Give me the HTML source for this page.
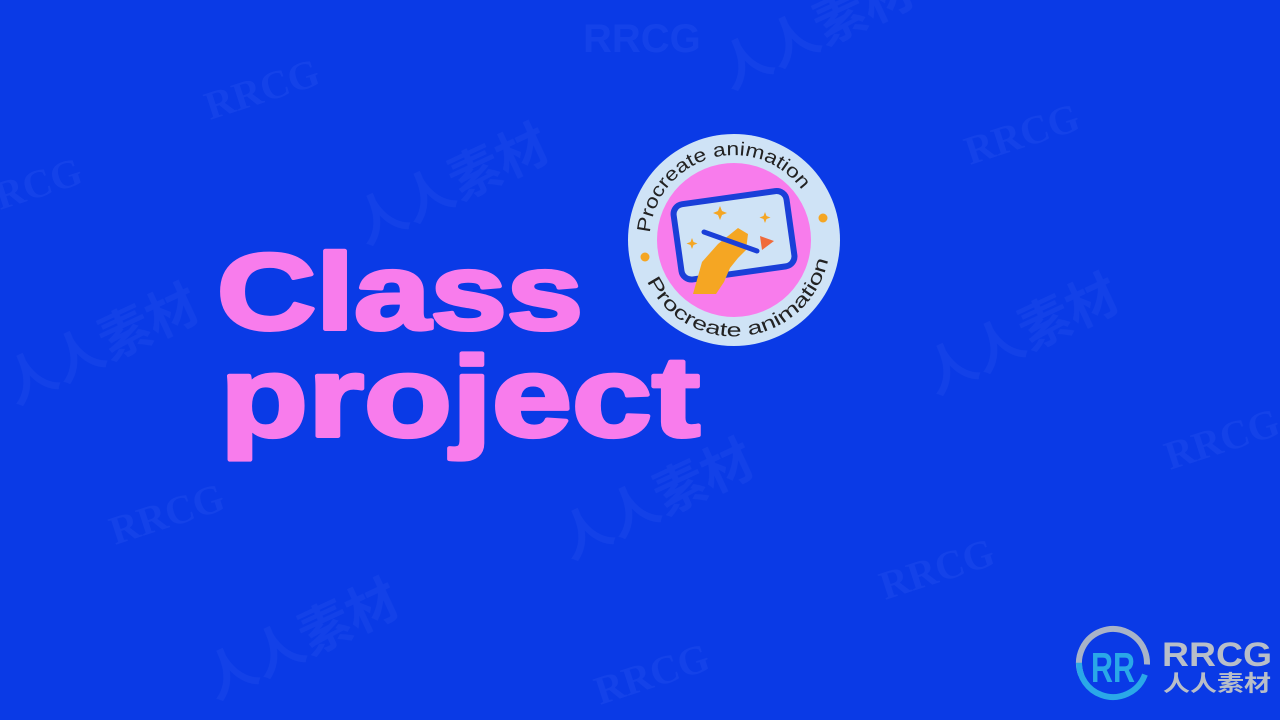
<!DOCTYPE html>
<html><head><meta charset="utf-8"><style>
html,body{margin:0;padding:0;width:1280px;height:720px;overflow:hidden;background:#0a3ae6;}
svg{position:absolute;left:0;top:0}
</style></head><body>
<svg width="1280" height="720" viewBox="0 0 1280 720" xmlns="http://www.w3.org/2000/svg">
<rect width="1280" height="720" fill="#0a3ae6"/>
<g font-family="Liberation Serif, serif" font-weight="bold" font-size="40" fill="#2a55ee" opacity="0.35">
<text x="583" y="52" font-family="Liberation Sans, sans-serif">RRCG</text>
<text x="210" y="120" transform="rotate(-18 210 120)">RRCG</text>
<text x="970" y="165" transform="rotate(-18 970 165)">RRCG</text>
<text x="0" y="210" transform="rotate(-18 0 210)">RCG</text>
<text x="1170" y="470" transform="rotate(-18 1170 470)">RRCG</text>
<text x="115" y="545" transform="rotate(-18 115 545)">RRCG</text>
<text x="885" y="600" transform="rotate(-18 885 600)">RRCG</text>
<text x="600" y="705" transform="rotate(-18 600 705)">RRCG</text>
</g>
<g font-family="Noto Sans CJK SC, sans-serif" font-weight="bold" font-size="52" fill="#2a55ee" opacity="0.3">
<text x="730" y="90" transform="rotate(-25 730 90)">人人素材</text>
<text x="365" y="245" transform="rotate(-25 365 245)">人人素材</text>
<text x="15" y="405" transform="rotate(-25 15 405)">人人素材</text>
<text x="935" y="395" transform="rotate(-25 935 395)">人人素材</text>
<text x="570" y="560" transform="rotate(-25 570 560)">人人素材</text>
<text x="215" y="700" transform="rotate(-25 215 700)">人人素材</text>
</g>
<g font-family="Liberation Sans, sans-serif" font-weight="bold" fill="#f87cec" stroke="#f87cec" stroke-width="4" stroke-linejoin="round">
<text x="217" y="329" font-size="108" textLength="366" lengthAdjust="spacingAndGlyphs">Class</text>
<text x="220" y="436" font-size="114" textLength="480" lengthAdjust="spacingAndGlyphs">project</text>
</g>
<g>
<circle cx="734" cy="240" r="106" fill="#cfe3f6"/>
<circle cx="734" cy="240" r="77" fill="#f87cec"/>
<circle cx="645" cy="257" r="4.5" fill="#f5a623"/>
<circle cx="823" cy="218" r="4.5" fill="#f5a623"/>
<defs>
<path id="arcTop" d="M 650 233 A 84 84 0 0 1 807 198"/>
<path id="arcBot" d="M 647 281 A 96 96 0 0 0 830 240"/>
</defs>
<text font-family="Liberation Sans, sans-serif" font-size="19" fill="#222"><textPath href="#arcTop" textLength="205" lengthAdjust="spacingAndGlyphs">Procreate animation</textPath></text>
<text font-family="Liberation Sans, sans-serif" font-size="19" fill="#222"><textPath href="#arcBot" textLength="240" lengthAdjust="spacingAndGlyphs">Procreate animation</textPath></text>
<g transform="rotate(-8 736 235)">
<rect x="677" y="197" width="114" height="76" rx="10" fill="#cfe3f6" stroke="#1a3fd8" stroke-width="6"/>
</g>
<path d="M720 206 l2 5 5 2 -5 2 -2 5 -2 -5 -5 -2 5 -2z" fill="#f5a623"/>
<path d="M765 212 l1.5 4 4 1.5 -4 1.5 -1.5 4 -1.5 -4 -4 -1.5 4 -1.5z" fill="#f5a623"/>
<path d="M692 238 l1.5 4 4 1.5 -4 1.5 -1.5 4 -1.5 -4 -4 -1.5 4 -1.5z" fill="#f5a623"/>
<path d="M760 236 l14 5 -12 9z" fill="#f06a3a"/>
<path d="M693 294 L702 262 L718 244 L738 228 L748 234 L746 250 L738 258 L730 268 L724 282 L716 294 Z" fill="#f5a623"/>
<line x1="704" y1="232" x2="757" y2="251" stroke="#1a3fd8" stroke-width="5" stroke-linecap="round"/>
</g>
<g>
<circle cx="1113" cy="663" r="34" fill="none" stroke="#a8b3c8" stroke-width="6" stroke-dasharray="120 94" transform="rotate(-200 1113 663)"/>
<circle cx="1113" cy="663" r="34" fill="none" stroke="#2aa8e8" stroke-width="6" stroke-dasharray="95 119" transform="rotate(20 1113 663)"/>
<text x="1113" y="682" text-anchor="middle" font-family="Liberation Sans, sans-serif" font-weight="bold" font-size="42" fill="#2aa8e8" textLength="44" lengthAdjust="spacingAndGlyphs">RR</text>
<text x="1162" y="666" font-family="Liberation Sans, sans-serif" font-weight="bold" font-size="34" fill="#b8bec8" textLength="110" lengthAdjust="spacingAndGlyphs">RRCG</text>
<text x="1163" y="691" font-family="Noto Sans CJK SC, sans-serif" font-weight="bold" font-size="22" fill="#b8bec8" textLength="108" lengthAdjust="spacingAndGlyphs">人人素材</text>
</g>
</svg>
</body></html>
